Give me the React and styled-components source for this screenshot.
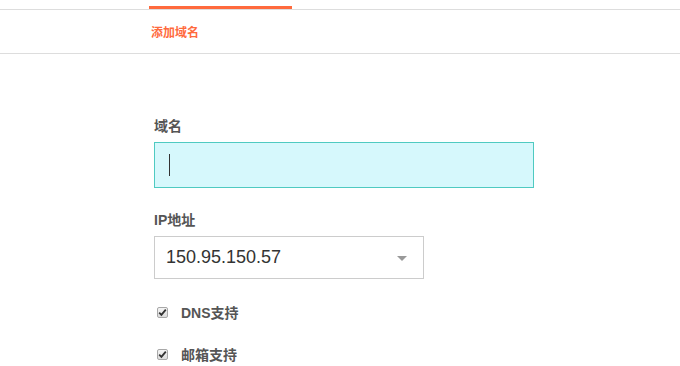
import React from "react";
import styled, { createGlobalStyle } from "styled-components";

const GlobalStyle = createGlobalStyle`
  html, body {
    margin: 0;
    padding: 0;
    background: #ffffff;
  }
  body {
    font-family: "Liberation Sans", "Noto Sans CJK SC", Arial, sans-serif;
    color: #555555;
  }
`;

const PageStyle = styled.div`
  width: 680px;
  height: 366px;
  overflow: hidden;
  padding-top: 9px;
  box-sizing: border-box;
`;

// tabs
const TabBarStyle = styled.nav`
  display: flex;
  align-items: center;
  height: 43px;
  border-top: 1px solid #dddddd;
  border-bottom: 1px solid #dddddd;
  padding-left: 149px;
`;
const TabStyle = styled.div`
  position: relative;
  display: flex;
  align-items: center;
  width: 143px;
  height: 100%;
  padding-left: 2px;
  box-sizing: border-box;
  font-size: 12px;
  font-weight: bold;
  color: ${(p) => (p.$active ? "#ff6a3d" : "#666666")};

  &::before {
    content: "";
    display: ${(p) => (p.$active ? "block" : "none")};
    position: absolute;
    left: 0;
    right: 0;
    top: -4px;
    height: 3px;
    background: #ff6a3d;
  }
`;

// form
const FormStyle = styled.form`
  display: flex;
  flex-direction: column;
  padding: 63px 0 0 154px;
`;
const LabelStyle = styled.label`
  display: block;
  font-size: 14px;
  font-weight: bold;
  line-height: 18px;
  color: #555555;
  margin-bottom: 7px;
`;
const TextFieldStyle = styled.div`
  display: flex;
  align-items: center;
  width: 380px;
  height: 46px;
  box-sizing: border-box;
  padding-left: 14px;
  border: 1px solid #4fcac1;
  background: #d6f8fc;
  margin-bottom: 23px;
`;
const CaretStyle = styled.span`
  display: block;
  width: 1px;
  height: 22px;
  background: #333333;
`;
const SelectStyle = styled.div`
  display: flex;
  align-items: center;
  justify-content: space-between;
  width: 270px;
  height: 43px;
  box-sizing: border-box;
  padding: 0 16px 0 11px;
  border: 1px solid #cccccc;
  background: #ffffff;
  font-size: 18px;
  color: #333333;
  margin-bottom: 23px;
`;
const ArrowStyle = styled.span`
  width: 0;
  height: 0;
  border-left: 5px solid transparent;
  border-right: 5px solid transparent;
  border-top: 5px solid #999999;
  margin-top: 1px;
`;
const CheckRowStyle = styled.label`
  display: flex;
  align-items: center;
  height: 20px;
  margin-left: 3px;
  margin-bottom: 22px;
  font-size: 14px;
  font-weight: bold;
  color: #555555;
`;
const CheckBoxStyle = styled.span`
  display: flex;
  align-items: center;
  justify-content: center;
  width: 11px;
  height: 11px;
  box-sizing: border-box;
  border: 1px solid #a8a8a8;
  border-radius: 2px;
  background: linear-gradient(#f4f4f4, #dcdcdc);
  margin-right: 13px;
`;

const CheckBox = () => (
  <CheckBoxStyle>
    <svg width="9" height="9" viewBox="0 0 9 9">
      <path d="M1.2 4.6 L3.4 6.8 L7.8 1.6" fill="none" stroke="#333" strokeWidth="1.8" />
    </svg>
  </CheckBoxStyle>
);

const App = () => {
  return (
    <PageStyle>
      <GlobalStyle />
      <TabBarStyle>
        <TabStyle $active>添加域名</TabStyle>
      </TabBarStyle>

      <FormStyle>
        <LabelStyle>域名</LabelStyle>
        <TextFieldStyle>
          <CaretStyle />
        </TextFieldStyle>

        <LabelStyle>IP地址</LabelStyle>
        <SelectStyle>
          <span>150.95.150.57</span>
          <ArrowStyle />
        </SelectStyle>

        <CheckRowStyle>
          <CheckBox />
          DNS支持
        </CheckRowStyle>
        <CheckRowStyle>
          <CheckBox />
          邮箱支持
        </CheckRowStyle>
      </FormStyle>
    </PageStyle>
  );
};

export default App;
